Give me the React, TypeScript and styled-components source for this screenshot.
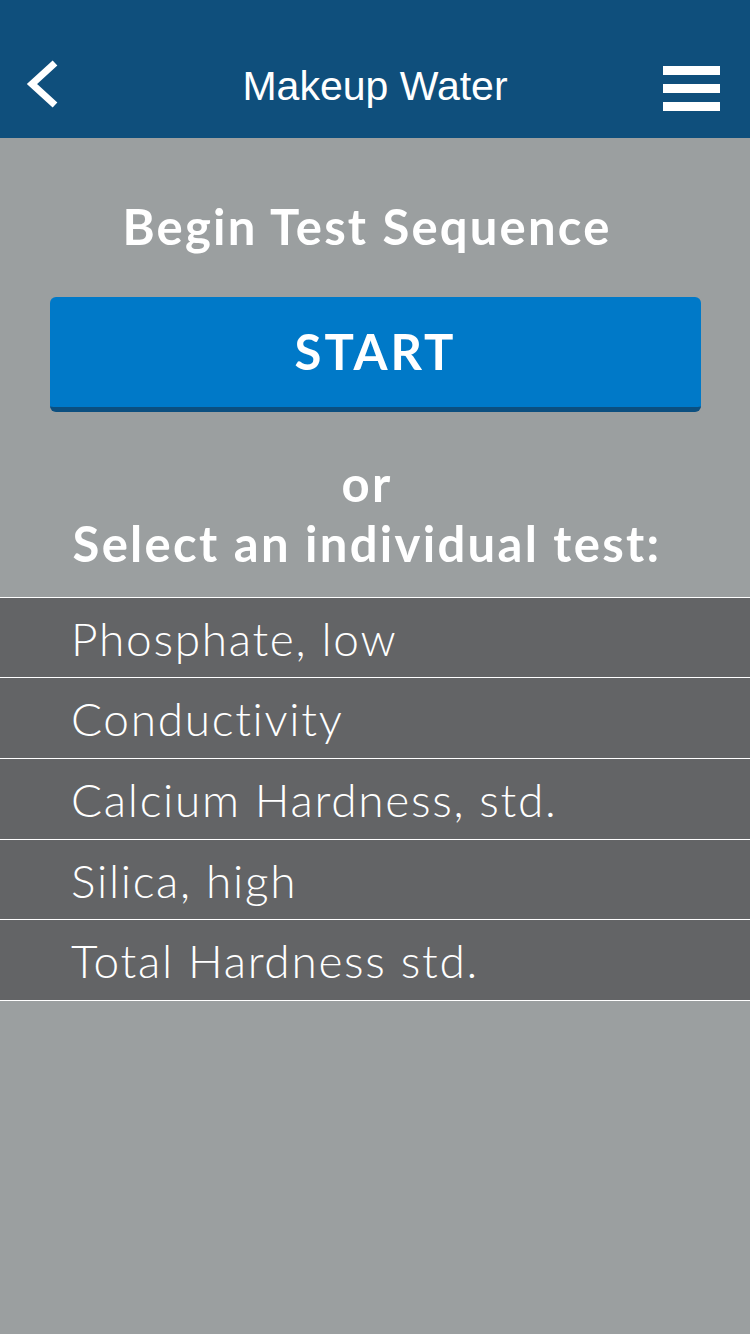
import React from "react";
import styled, { createGlobalStyle } from "styled-components";

const GlobalStyle = createGlobalStyle`
  html, body {
    margin: 0;
    padding: 0;
    background: #9b9fa0;
  }
  * { box-sizing: border-box; }
`;

const Page = styled.div`
  width: 750px;
  min-height: 1334px;
  background: #9b9fa0;
  display: flex;
  flex-direction: column;
  font-family: Lato, "Open Sans", "Liberation Sans", sans-serif;
`;

const Header = styled.header`
  height: 138px;
  padding-top: 40px;
  background: #0f4f7c;
  display: grid;
  grid-template-columns: 1fr auto 1fr;
  align-items: start;
`;

const HeaderSlot = styled.div<{ $align: "start" | "end" }>`
  height: 90px;
  display: flex;
  align-items: center;
  justify-content: ${(p) => (p.$align === "start" ? "flex-start" : "flex-end")};
  padding: ${(p) => (p.$align === "start" ? "0 0 0 20px" : "0 30px 0 0")};
`;

const Title = styled.h1`
  margin: 0;
  height: 92px;
  display: flex;
  align-items: center;
  font-family: "Liberation Sans", Arial, sans-serif;
  font-weight: 400;
  font-size: 41px;
  color: #ffffff;
`;

const IconButton = styled.button`
  border: 0;
  background: transparent;
  padding: 0;
  display: flex;
  cursor: pointer;
`;

const Burger = styled.div`
  display: flex;
  flex-direction: column;
  gap: 9px;
  margin-top: 6px;
`;

const BurgerBar = styled.span`
  display: block;
  width: 57px;
  height: 9px;
  background: #ffffff;
`;

const Content = styled.main`
  display: flex;
  flex-direction: column;
  align-items: center;
  padding-top: 59px;
`;

const Heading = styled.h2`
  margin: 0 16px 0 0;
  font-size: 49px;
  line-height: 1.2;
  font-weight: 700;
  color: #ffffff;
  letter-spacing: 2.2px;
  text-align: center;
`;

const StartButton = styled.button`
  margin-top: 41px;
  width: 651px;
  height: 115px;
  margin-left: 1px;
  border: 0;
  border-bottom: 5px solid #0b4f80;
  border-radius: 6px;
  background: #0079c8;
  color: #ffffff;
  font-family: Lato, "Open Sans", sans-serif;
  font-weight: 700;
  font-size: 49px;
  line-height: 1.2;
  letter-spacing: 3px;
  display: flex;
  align-items: center;
  justify-content: center;
  cursor: pointer;
`;

const Prompt = styled.p`
  margin: 41px 16px 0 0;
  font-size: 49px;
  line-height: 60px;
  font-weight: 700;
  color: #ffffff;
  letter-spacing: 2.3px;
  text-align: center;
`;

const TestList = styled.ul`
  list-style: none;
  margin: 24px 0 0;
  padding: 0;
  width: 100%;
  border-top: 1px solid #ffffff;
`;

const TestRow = styled.li`
  height: 80.6px;
  padding: 1px 0 0 71px;
  background: #636466;
  border-bottom: 1px solid #ffffff;
  color: #ffffff;
  font-size: 46px;
  font-weight: 300;
  letter-spacing: 1.7px;
  line-height: 79px;
  white-space: nowrap;
`;

const tests = [
  "Phosphate, low",
  "Conductivity",
  "Calcium Hardness, std.",
  "Silica, high",
  "Total Hardness std.",
];

export default function App() {
  return (
    <>
      <GlobalStyle />
      <Page>
        <Header>
          <HeaderSlot $align="start">
            <IconButton aria-label="Back">
              <svg width="42" height="52" viewBox="0 0 42 52">
                <polyline
                  points="35,4 12,25 35,46"
                  fill="none"
                  stroke="#ffffff"
                  strokeWidth="7"
                  strokeLinejoin="miter"
                />
              </svg>
            </IconButton>
          </HeaderSlot>
          <Title>Makeup Water</Title>
          <HeaderSlot $align="end">
            <IconButton aria-label="Menu">
              <Burger>
                <BurgerBar />
                <BurgerBar />
                <BurgerBar />
              </Burger>
            </IconButton>
          </HeaderSlot>
        </Header>
        <Content>
          <Heading>Begin Test Sequence</Heading>
          <StartButton>START</StartButton>
          <Prompt>
            or
            <br />
            Select an individual test:
          </Prompt>
          <TestList>
            {tests.map((t) => (
              <TestRow key={t}>{t}</TestRow>
            ))}
          </TestList>
        </Content>
      </Page>
    </>
  );
}
